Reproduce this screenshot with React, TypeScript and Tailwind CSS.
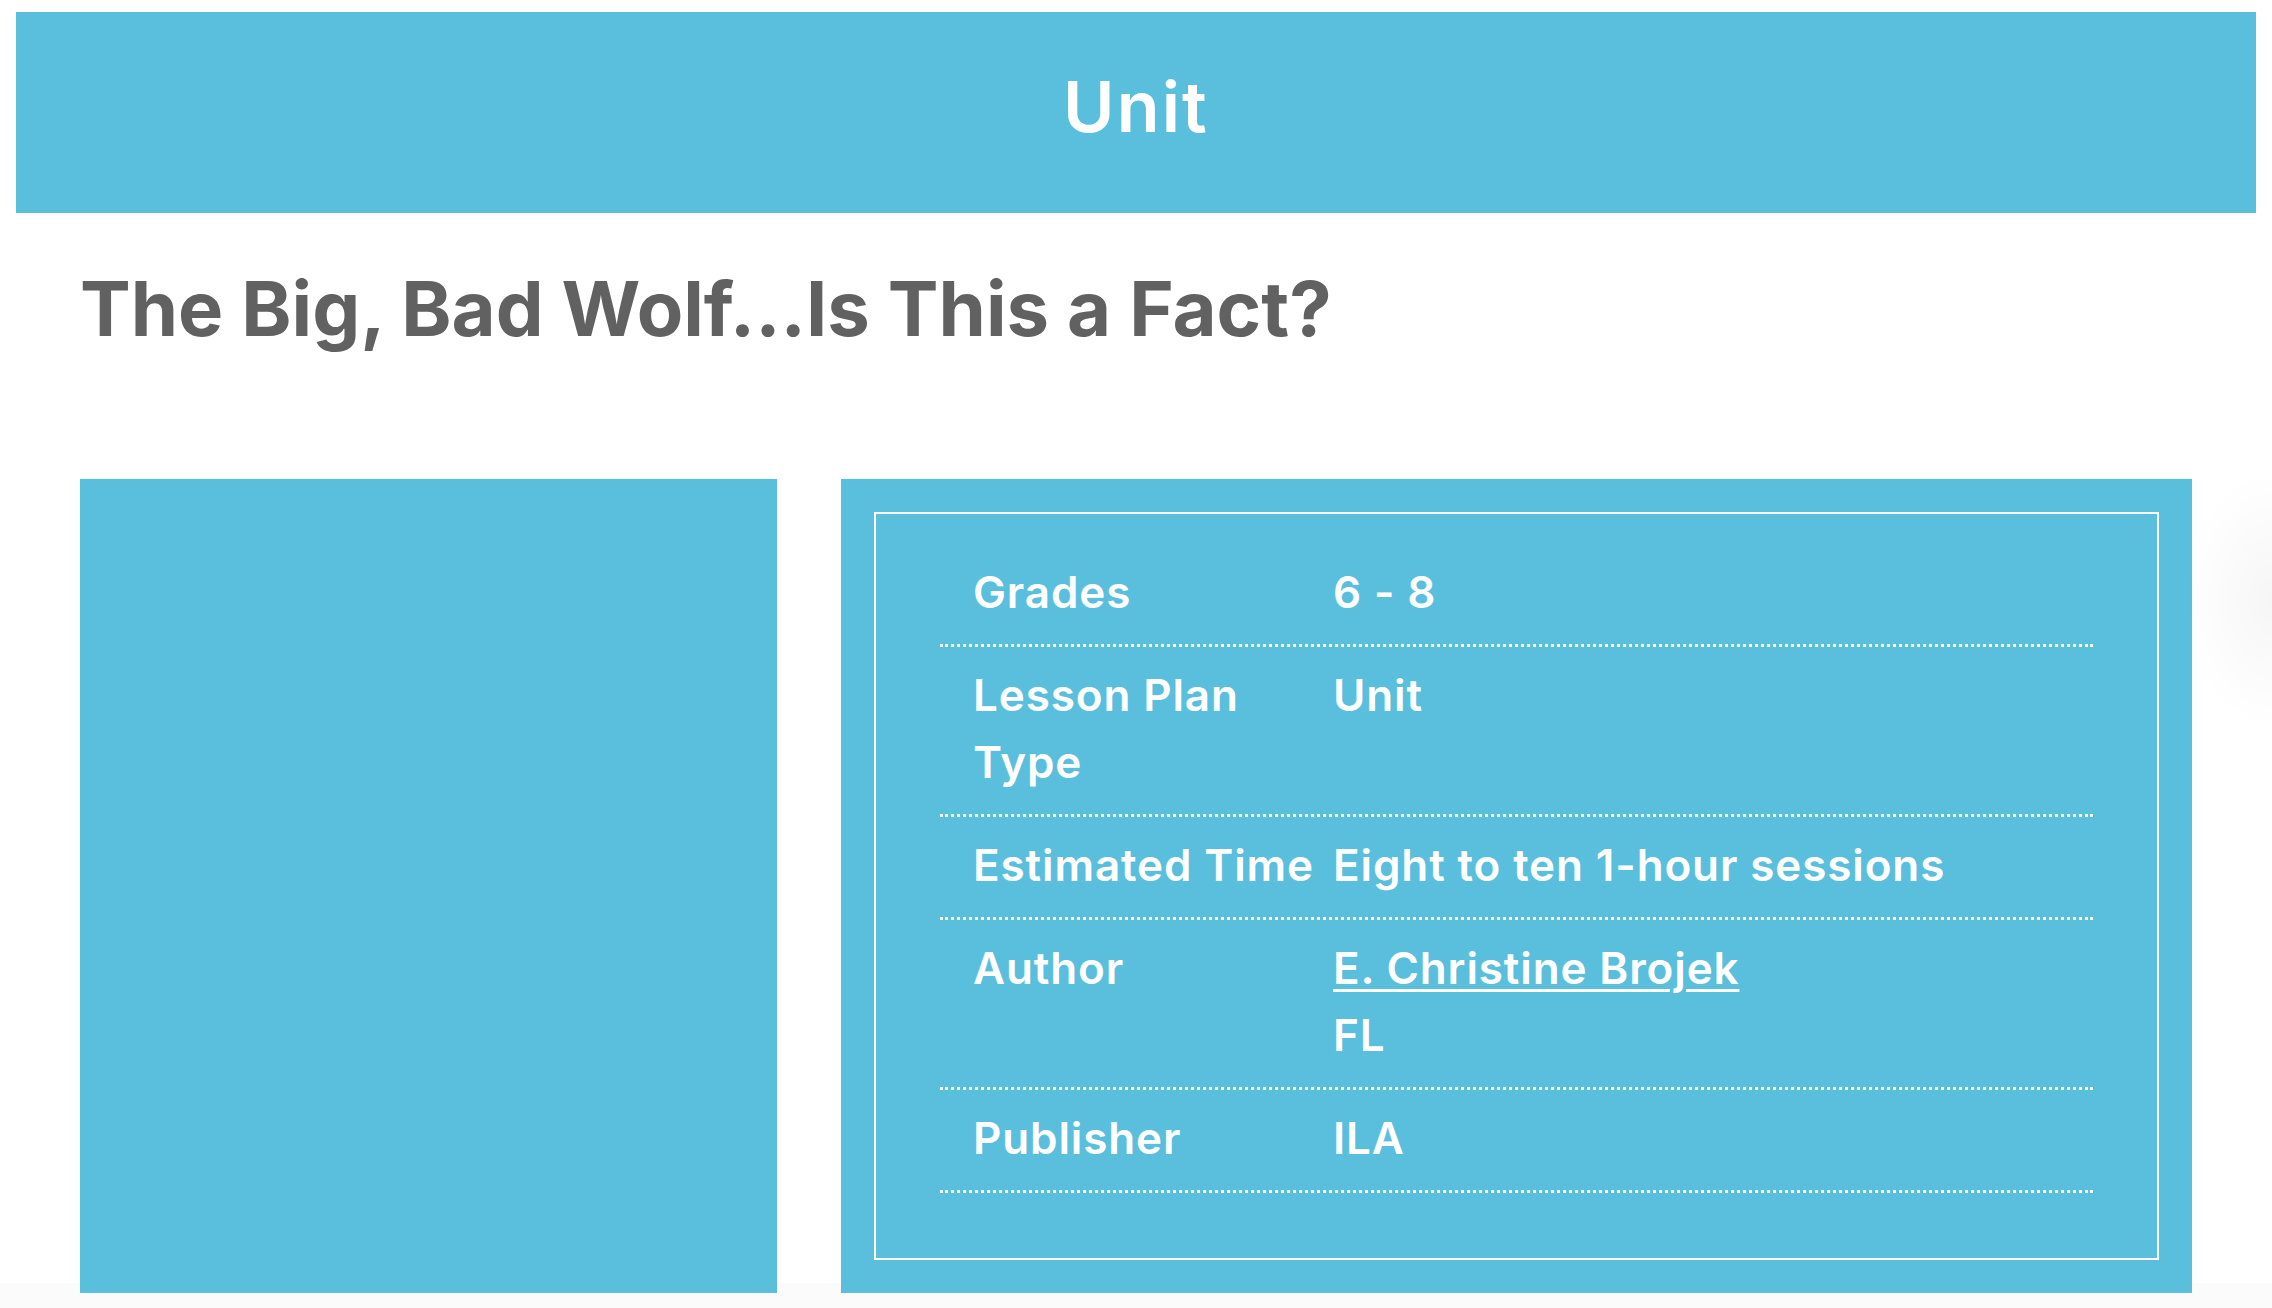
import React from "react";

const font = { fontFamily: "Inter, 'Noto Sans', sans-serif" };

type Row = { label: React.ReactNode; value: React.ReactNode };

const rows: Row[] = [
  { label: "Grades", value: "6 - 8" },
  {
    label: (
      <>
        Lesson Plan
        <br />
        Type
      </>
    ),
    value: "Unit",
  },
  { label: "Estimated Time", value: "Eight to ten 1-hour sessions" },
  {
    label: "Author",
    value: (
      <>
        <a
          href="#"
          className="underline decoration-[3px] underline-offset-[5px]"
        >
          E. Christine Brojek
        </a>
        <br />
        FL
      </>
    ),
  },
  { label: "Publisher", value: "ILA" },
];

export default function App() {
  return (
    <div
      className="relative min-h-screen w-full overflow-hidden bg-[linear-gradient(to_bottom,#ffffff_1283px,#fbfbfb_1283px)]"
      style={font}
    >
      {/* banner */}
      <div className="mx-[16px] mt-[12px] flex h-[201px] items-center justify-center bg-[#5abfdc] pb-[12px]">
        <h1 className="text-[70px] font-semibold leading-none tracking-[0.03em] text-white">Unit</h1>
      </div>

      <div className="px-[80px]">
        <h2 className="mt-[57px] text-[76px] font-bold leading-none text-[#616161]">
          The Big, Bad Wolf...Is This a Fact?
        </h2>

        <div className="mt-[133px] grid grid-cols-[697px_1fr] gap-[64px]">
          <div className="bg-[#5abfdc]" />
          <div className="bg-[#5abfdc] p-[33px]">
            <div className="border-2 border-white px-[64px] pb-[65px] pt-[30px]">
              {rows.map((r, i) => (
                <div
                  key={i}
                  className="flex border-b-[3px] border-dotted border-white pb-[18px] pt-[15px] text-[44px] font-semibold leading-[67px] tracking-[0.02em] text-white"
                >
                  <div className="w-[393px] shrink-0 whitespace-nowrap pl-[33px]">{r.label}</div>
                  <div className="whitespace-nowrap">{r.value}</div>
                </div>
              ))}
            </div>
          </div>
        </div>
      </div>

      {/* faint shadow at right edge */}
      <div className="pointer-events-none absolute right-[-90px] top-[470px] h-[260px] w-[180px] rounded-full bg-[radial-gradient(closest-side,rgba(0,0,0,0.035),rgba(0,0,0,0))]" />
    </div>
  );
}
